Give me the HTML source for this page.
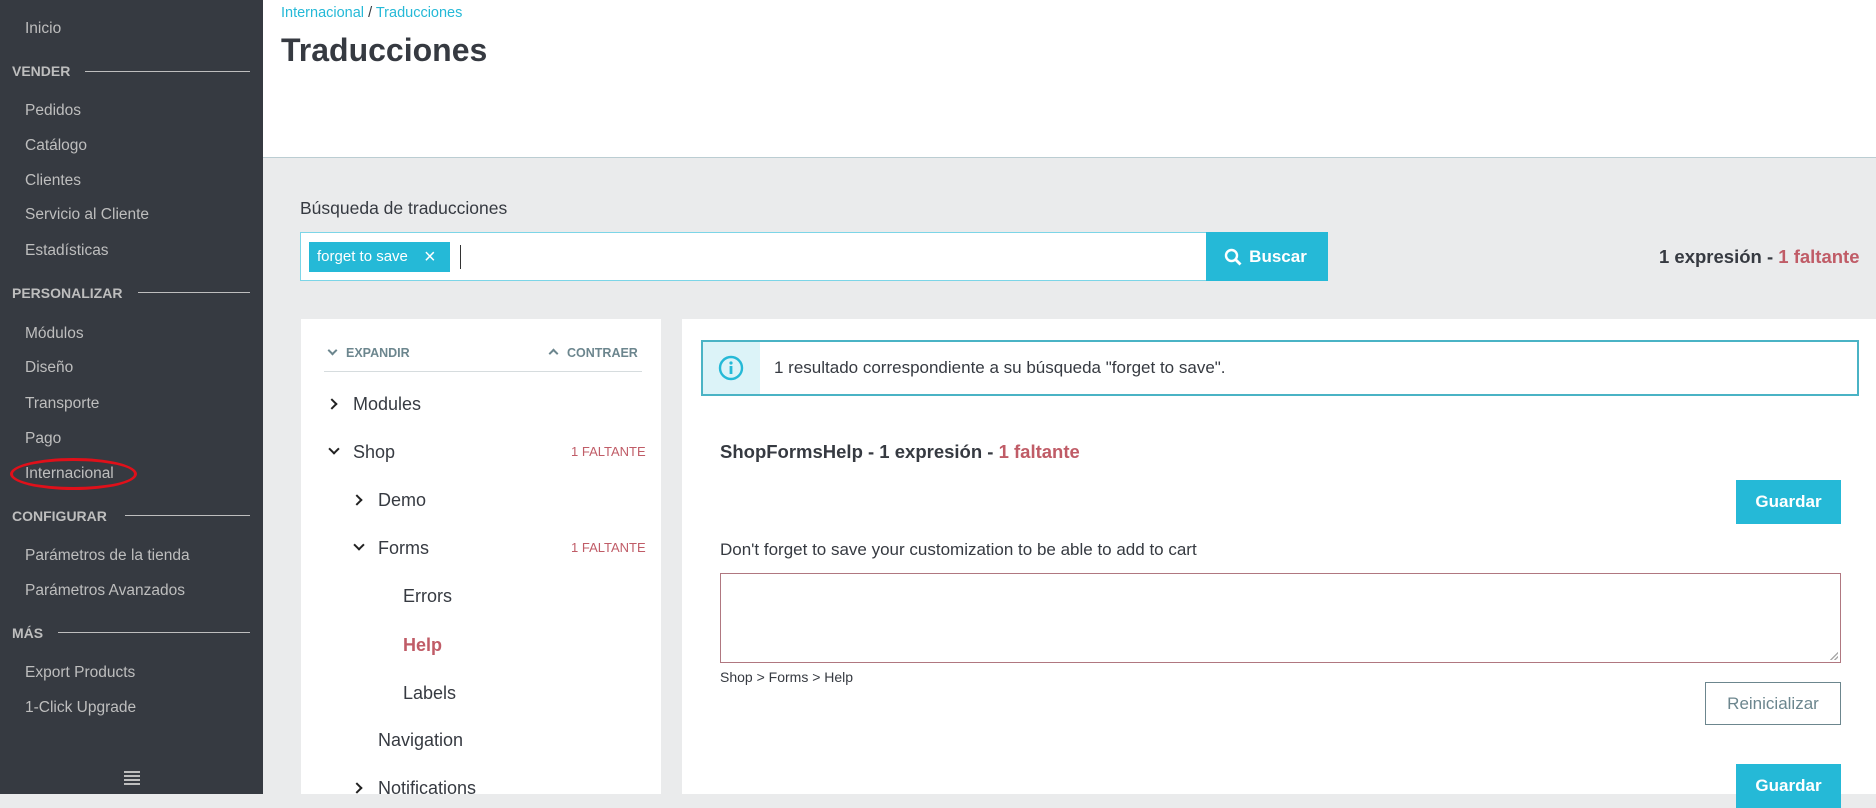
<!DOCTYPE html>
<html><head><meta charset="utf-8">
<style>
*{margin:0;padding:0;box-sizing:border-box}
body{width:1876px;height:794px;overflow:hidden;background:#eaebec;font-family:"Liberation Sans",sans-serif;position:relative;color:#363a41}
.a{position:absolute;white-space:nowrap}
#sb{position:absolute;left:0;top:0;width:263px;height:794px;background:#363a41}
.it{position:absolute;left:25px;color:#bebebe;font-size:15.5px;line-height:20px}
.hd{position:absolute;left:12px;color:#bebebe;font-size:14px;font-weight:bold;line-height:20px}
.ln{position:absolute;height:1px;background:#bebebe;right:13px}
.tr{position:absolute;font-size:18px;color:#363a41;line-height:22px}
.chev{position:absolute;width:8px;height:8px;border-right:2.5px solid #222;border-bottom:2.5px solid #222}
.btn{position:absolute;background:#25b9d7;color:#fff;font-weight:bold;font-size:17px;text-align:center}
</style></head><body>
<div id="sb">
<div class="it" style="top:19px">Inicio</div>
<div class="hd" style="top:61px">VENDER</div><div class="ln" style="left:85px;top:71px"></div>
<div class="it" style="top:101px">Pedidos</div>
<div class="it" style="top:136px">Catálogo</div>
<div class="it" style="top:171px">Clientes</div>
<div class="it" style="top:205px">Servicio al Cliente</div>
<div class="it" style="top:241px">Estadísticas</div>
<div class="hd" style="top:283px">PERSONALIZAR</div><div class="ln" style="left:138px;top:292px"></div>
<div class="it" style="top:324px">Módulos</div>
<div class="it" style="top:358px">Diseño</div>
<div class="it" style="top:394px">Transporte</div>
<div class="it" style="top:429px">Pago</div>
<div class="it" style="top:464px">Internacional</div>
<div style="position:absolute;left:10px;top:458px;width:127px;height:32px;border:3px solid #e0101a;border-radius:50%"></div>
<div class="hd" style="top:506px">CONFIGURAR</div><div class="ln" style="left:125px;top:515px"></div>
<div class="it" style="top:546px">Parámetros de la tienda</div>
<div class="it" style="top:581px">Parámetros Avanzados</div>
<div class="hd" style="top:623px">MÁS</div><div class="ln" style="left:58px;top:632px"></div>
<div class="it" style="top:663px">Export Products</div>
<div class="it" style="top:698px">1-Click Upgrade</div>
<div style="position:absolute;left:124px;top:771px;width:16px;height:14px;background:repeating-linear-gradient(#bebebe 0 2px,transparent 2px 4px)"></div>
</div>

<div style="position:absolute;left:263px;top:0;width:1613px;height:158px;background:#fff;border-bottom:1px solid #bbcdd2"></div>
<div class="a" style="left:281px;top:5px;font-size:14.5px;color:#25b9d7">Internacional <span style="color:#363a41">/</span> Traducciones</div>
<div class="a" style="left:281px;top:32px;font-size:32px;font-weight:bold;color:#363a41">Traducciones</div>

<div class="a" style="left:300px;top:198px;font-size:17.5px;color:#363a41">Búsqueda de traducciones</div>
<div style="position:absolute;left:300px;top:232px;width:907px;height:49px;background:#fff;border:1px solid #7cd5e7"></div>
<div class="a" style="left:309px;top:242px;width:141px;height:30px;background:#25b9d7;color:#fff;font-size:15px;line-height:30px;padding-left:8px">forget to save <span style="position:absolute;left:115px;top:0;font-size:20px">×</span></div>
<div style="position:absolute;left:460px;top:245px;width:1px;height:24px;background:#333"></div>
<div class="btn" style="left:1206px;top:232px;width:122px;height:49px;line-height:49px;padding-left:22px">Buscar
<svg style="position:absolute;left:18px;top:16px" width="18" height="18" viewBox="0 0 18 18"><circle cx="7.5" cy="7.5" r="5.5" fill="none" stroke="#fff" stroke-width="2.4"/><path d="M11.5 11.5L16.5 16.5" stroke="#fff" stroke-width="2.8"/></svg></div>
<div class="a" style="left:1659px;top:246px;font-size:18.5px;font-weight:bold;color:#363a41">1 expresión - <span style="color:#c05c67">1 faltante</span></div>

<div style="position:absolute;left:301px;top:319px;width:360px;height:475px;background:#fff"></div>
<div class="a" style="left:327px;top:346px;font-size:12.5px;font-weight:bold;color:#6c868e"><span style="display:inline-block;width:7px;height:7px;border-right:2px solid #6c868e;border-bottom:2px solid #6c868e;transform:rotate(45deg);margin:0 10px 3px 2px"></span>EXPANDIR</div>
<div class="a" style="left:548px;top:346px;font-size:12.5px;font-weight:bold;color:#6c868e"><span style="display:inline-block;width:7px;height:7px;border-left:2px solid #6c868e;border-top:2px solid #6c868e;transform:rotate(45deg);margin:0 10px 0 2px"></span>CONTRAER</div>
<div style="position:absolute;left:324px;top:371px;width:318px;height:1px;background:#d6dcde"></div>

<div class="chev" style="left:328px;top:400px;transform:rotate(-45deg)"></div><div class="tr" style="left:353px;top:393px">Modules</div>
<div class="chev" style="left:330px;top:445px;transform:rotate(45deg)"></div><div class="tr" style="left:353px;top:441px">Shop</div>
<div class="a" style="left:571px;top:444px;font-size:13px;color:#c05c67">1 FALTANTE</div>
<div class="chev" style="left:353px;top:496px;transform:rotate(-45deg)"></div><div class="tr" style="left:378px;top:489px">Demo</div>
<div class="chev" style="left:355px;top:541px;transform:rotate(45deg)"></div><div class="tr" style="left:378px;top:537px">Forms</div>
<div class="a" style="left:571px;top:540px;font-size:13px;color:#c05c67">1 FALTANTE</div>
<div class="tr" style="left:403px;top:585px">Errors</div>
<div class="tr" style="left:403px;top:634px;font-weight:bold;color:#c05c67">Help</div>
<div class="tr" style="left:403px;top:682px">Labels</div>
<div class="tr" style="left:378px;top:729px">Navigation</div>
<div class="chev" style="left:353px;top:784px;transform:rotate(-45deg)"></div><div class="tr" style="left:378px;top:777px">Notifications</div>

<div style="position:absolute;left:682px;top:319px;width:1194px;height:475px;background:#fff"></div>
<div style="position:absolute;left:701px;top:340px;width:1158px;height:56px;border:2px solid #4ab3c5;background:#fff"></div>
<div style="position:absolute;left:703px;top:342px;width:57px;height:52px;background:#dcf3f8"></div>
<svg style="position:absolute;left:718px;top:355px" width="26" height="26" viewBox="0 0 26 26"><circle cx="13" cy="13" r="11" fill="none" stroke="#25b9d7" stroke-width="2.4"/><circle cx="13" cy="8" r="1.6" fill="#25b9d7"/><rect x="11.6" y="11" width="2.8" height="8" fill="#25b9d7"/></svg>
<div class="a" style="left:774px;top:358px;font-size:17px;color:#363a41">1 resultado correspondiente a su búsqueda "forget to save".</div>
<div class="a" style="left:720px;top:441px;font-size:18.5px;font-weight:bold;color:#363a41">ShopFormsHelp - 1 expresión - <span style="color:#c05c67">1 faltante</span></div>
<div class="btn" style="left:1736px;top:480px;width:105px;height:44px;line-height:44px">Guardar</div>
<div class="a" style="left:720px;top:540px;font-size:17px;color:#363a41">Don't forget to save your customization to be able to add to cart</div>
<div style="position:absolute;left:720px;top:573px;width:1121px;height:90px;border:1px solid #b07780"></div>
<div style="position:absolute;left:1830px;top:652px;width:8px;height:8px;background:linear-gradient(135deg,transparent 50%,#aaa 50%,#aaa 60%,transparent 60%,transparent 75%,#aaa 75%,#aaa 85%,transparent 85%)"></div>
<div class="a" style="left:720px;top:669px;font-size:14px;color:#363a41">Shop &gt; Forms &gt; Help</div>
<div class="a" style="left:1705px;top:682px;width:136px;height:43px;border:1px solid #6c868e;color:#6c868e;font-size:17px;line-height:41px;text-align:center;background:#fff">Reinicializar</div>
<div class="btn" style="left:1736px;top:764px;width:105px;height:44px;line-height:44px">Guardar</div>
</body></html>
